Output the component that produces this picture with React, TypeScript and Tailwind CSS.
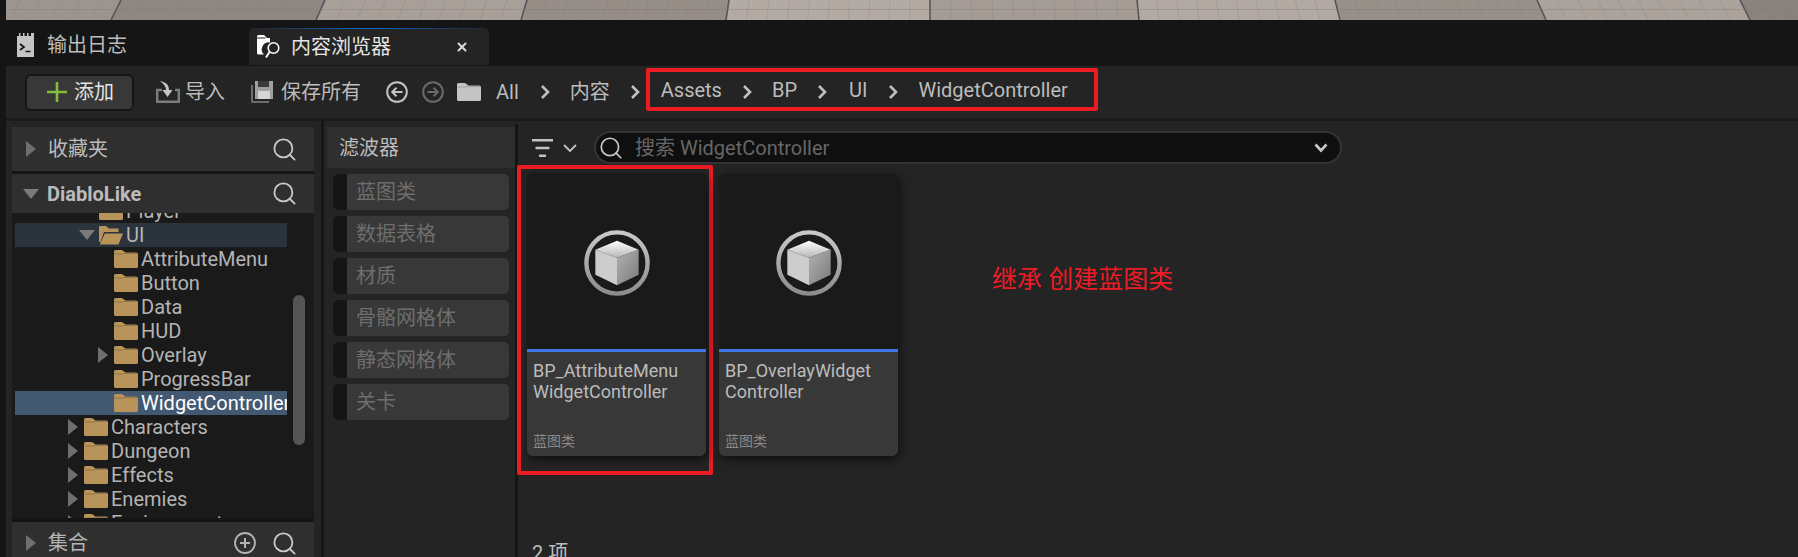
import { Search, X } from "lucide-react";

const cells = [
  { t: -80, b: -90, c: "#9c948e" },
  { t: 121, b: 111, c: "#8f8781" },
  { t: 325, b: 316, c: "#a89f99" },
  { t: 527, b: 521, c: "#968d87" },
  { t: 729, b: 726, c: "#b3aaa4" },
  { t: 930, b: 930, c: "#a59c96" },
  { t: 1137, b: 1139, c: "#b2a9a3" },
  { t: 1335, b: 1340, c: "#979089" },
  { t: 1537, b: 1546, c: "#aaa29b" },
  { t: 1740, b: 1750, c: "#8a827c" },
];

// the strip of floor left over from the viewport above the panel
function Floor() {
  return (
    <svg viewBox="6 0 1792 20" className="block h-[20px] w-full shrink-0">
      {cells.map((cell, i) => {
        const next = cells[i + 1] ?? { t: 1950, b: 1965 };
        const lines = Array.from({ length: 10 }, (_, n) => n + 1);
        return (
          <g key={cell.t}>
            <polygon points={`${cell.t},0 ${next.t},0 ${next.b},20 ${cell.b},20`} fill={cell.c} />
            {lines.map((n) => (
              <line
                key={n}
                x1={cell.t + ((next.t - cell.t) * n) / 10}
                y1={0}
                x2={cell.b + ((next.b - cell.b) * n) / 10}
                y2={20}
                stroke="#7d7671"
                strokeOpacity={0.3}
                strokeWidth={0.8}
              />
            ))}
            <line x1={cell.t} y1={0} x2={cell.b} y2={20} stroke="#55555c" strokeWidth={1.6} />
          </g>
        );
      })}
      <line x1={0} y1={9.5} x2={1800} y2={9.5} stroke="#7d7671" strokeOpacity={0.45} strokeWidth={0.8} />
    </svg>
  );
}

function Chevron({ className = "" }: { className?: string }) {
  return (
    <svg viewBox="0 0 10 16" className={`h-[16px] w-[10px] shrink-0 ${className}`}>
      <path d="M2 2l6 6-6 6" fill="none" stroke="#c0c0c0" strokeWidth="2.6" />
    </svg>
  );
}

function Folder({ color = "#b8935a", className = "" }: { color?: string; className?: string }) {
  return (
    <svg viewBox="0 0 24 18" className={`h-[18px] w-[24px] shrink-0 ${className}`}>
      <path d="M0 1.5Q0 0 1.5 0H8l3.5 2.5H22.500Q24 2.500 24 4V16.500Q24 18 22.500 18H1.500Q0 18 0 16.500Z" fill={color} />
      <path d="M0 3.500h8.500L11 2.800H24V4H11L8.500 4.500H0Z" fill="#000" fillOpacity={0.18} />
    </svg>
  );
}

function OpenFolder() {
  return (
    <svg viewBox="0 0 24 20" className="h-[20px] w-[24px] shrink-0">
      <path d="M0 2Q0 1 1 1h6l3 2.500h9.500V7H5L1.500 17H0Z" fill="#b8935a" />
      <path d="M5.800 8.500H24L19.500 19.500H.8Z" fill="#b8935a" />
    </svg>
  );
}

function Triangle({ down = false, className = "" }: { down?: boolean; className?: string }) {
  return down ? (
    <svg viewBox="0 0 16 10" className={`h-[10px] w-[16px] shrink-0 ${className}`}>
      <path d="M0 0h16l-8 10z" fill="#7a7a7a" />
    </svg>
  ) : (
    <svg viewBox="0 0 10 16" className={`h-[16px] w-[10px] shrink-0 ${className}`}>
      <path d="M0 0l10 8-10 8z" fill="#6f6f6f" />
    </svg>
  );
}

function BlueprintIcon() {
  return (
    <svg viewBox="-35 -35 70 70" className="h-[68px] w-[68px]">
      <defs>
        <linearGradient id="ring" x1="0" y1="0" x2="0" y2="1">
          <stop offset="0" stopColor="#c8c8c8" />
          <stop offset="1" stopColor="#8c8c8c" />
        </linearGradient>
        <linearGradient id="cubeTop" x1="0" y1="0" x2="0" y2="1">
          <stop offset="0" stopColor="#ffffff" />
          <stop offset="1" stopColor="#b4b4b4" />
        </linearGradient>
        <linearGradient id="cubeRight" x1="0" y1="0" x2="1" y2="1">
          <stop offset="0" stopColor="#b0b0b0" />
          <stop offset="1" stopColor="#7c7c7c" />
        </linearGradient>
      </defs>
      <circle r="31.500" fill="none" stroke="url(#ring)" strokeWidth="4.500" />
      <path d="M0-23L22.300-13.700 0-5.300-22.300-13.700Z" fill="url(#cubeTop)" />
      <path d="M-22.300-13.700L0-5.300V23L-22.300 12Z" fill="#cdcdcd" />
      <path d="M22.300-13.700L0-5.300V23L22.300 12Z" fill="url(#cubeRight)" />
    </svg>
  );
}

function LogIcon() {
  return (
    <svg viewBox="0 0 17 24" className="ml-[11px] h-[24px] w-[17px] shrink-0">
      <path d="M0 3h2V0h1.500v3h2.500V0h1.500v3h2.500V0h1.500v3h2.500V0H17v24H0Z" fill="#c4c4c4" />
      <path d="M3 11l4 3-4 3M8.500 18.500h5" fill="none" stroke="#151515" strokeWidth="1.700" />
    </svg>
  );
}

function BrowserIcon() {
  return (
    <svg viewBox="0 0 24 24" className="ml-[8px] h-[24px] w-[24px] shrink-0">
      <path d="M0 1.500Q0 0 1.500 0H7l3 3h3V7.500A7 7 0 0 0 7 19.500H1.500Q0 19.500 0 18Z" fill="#ffffff" />
      <path d="M0 3h8.500" stroke="#242424" strokeWidth="1" />
      <circle cx="16.500" cy="13" r="5.300" fill="none" stroke="#ffffff" strokeWidth="1.600" />
      <path d="M12.500 17L9 22.500" stroke="#ffffff" strokeWidth="2" />
    </svg>
  );
}

function ImportIcon() {
  return (
    <svg viewBox="0 0 24 22" className="ml-[22px] h-[22px] w-[24px] shrink-0">
      <path d="M6 9H1.200V20.800H22.800V9H19" fill="none" stroke="#7c7c7c" strokeWidth="2.400" />
      <path d="M4 0C10 1 13 4 13 9h3.500L11.500 16 6.500 9H10C10 6 8 3 4 0Z" fill="#c4c4c4" />
    </svg>
  );
}

function SaveIcon() {
  return (
    <svg viewBox="0 0 22 22" className="h-[22px] w-[22px] shrink-0">
      <path d="M0 4h2V20H18V22H1.500Q0 22 0 20.500Z" fill="#6c6c6c" />
      <path d="M4 0H22V18H4Z" fill="#a0a0a0" />
      <path d="M7 0H18V6H7Z" fill="#3a3a3a" />
      <path d="M7 10H19V18H7Z" fill="#d4d4d4" />
    </svg>
  );
}

function CircleArrow({ dim = false, className = "" }: { dim?: boolean; className?: string }) {
  const c = dim ? "#6a6a6a" : "#c4c4c4";
  return (
    <svg viewBox="0 0 22 22" className={`h-[22px] w-[22px] shrink-0 ${className}`}>
      <circle cx="11" cy="11" r="9.800" fill="none" stroke={c} strokeWidth="2" />
      {dim ? (
        <path d="M5.500 11H15M11.500 6.800L15.800 11l-4.300 4.200" fill="none" stroke={c} strokeWidth="2" />
      ) : (
        <path d="M16.500 11H7M10.500 6.800L6.200 11l4.300 4.200" fill="none" stroke={c} strokeWidth="2" />
      )}
    </svg>
  );
}

function FilterIcon() {
  return (
    <svg viewBox="0 0 21 18" className="h-[18px] w-[21px] shrink-0">
      <path d="M0 1.200H21M4.500 9H16.500M8 16.800H13" stroke="#c4c4c4" strokeWidth="2.400" strokeLinecap="round" />
    </svg>
  );
}

function PlusCircle() {
  return (
    <svg viewBox="0 0 22 22" className="h-[22px] w-[22px] shrink-0">
      <circle cx="11" cy="11" r="10" fill="none" stroke="#b4b4b4" strokeWidth="1.800" />
      <path d="M11 6v10M6 11h10" stroke="#b4b4b4" strokeWidth="2" />
    </svg>
  );
}

function GreenPlus() {
  return (
    <svg viewBox="0 0 20 20" className="h-[20px] w-[20px] shrink-0">
      <path d="M10 0v20M0 10h20" stroke="#84bd3c" strokeWidth="2.600" />
    </svg>
  );
}

type Row = { name: string; pad: string; slot: string; arrow?: "right" | "down"; open?: boolean; tone?: string };

const rows: Row[] = [
  { name: "Player", pad: "pl-[64px]", slot: "w-[20px]" },
  { name: "UI", pad: "pl-[64px]", slot: "w-[20px]", arrow: "down", open: true, tone: "bg-[#2b333d]" },
  { name: "AttributeMenu", pad: "pl-[83px]", slot: "w-[16px]" },
  { name: "Button", pad: "pl-[83px]", slot: "w-[16px]" },
  { name: "Data", pad: "pl-[83px]", slot: "w-[16px]" },
  { name: "HUD", pad: "pl-[83px]", slot: "w-[16px]" },
  { name: "Overlay", pad: "pl-[83px]", slot: "w-[16px]", arrow: "right" },
  { name: "ProgressBar", pad: "pl-[83px]", slot: "w-[16px]" },
  { name: "WidgetController", pad: "pl-[83px]", slot: "w-[16px]", tone: "bg-[#435871] text-white" },
  { name: "Characters", pad: "pl-[53px]", slot: "w-[16px]", arrow: "right" },
  { name: "Dungeon", pad: "pl-[53px]", slot: "w-[16px]", arrow: "right" },
  { name: "Effects", pad: "pl-[53px]", slot: "w-[16px]", arrow: "right" },
  { name: "Enemies", pad: "pl-[53px]", slot: "w-[16px]", arrow: "right" },
  { name: "Environment", pad: "pl-[53px]", slot: "w-[16px]", arrow: "right" },
];

const filters = ["蓝图类", "数据表格", "材质", "骨骼网格体", "静态网格体", "关卡"];

function AssetCard({ lines }: { lines: string[] }) {
  return (
    <div className="flex h-[283px] w-[179px] shrink-0 flex-col overflow-hidden rounded-[6px] shadow-[2px_4px_8px_rgba(0,0,0,0.55)]">
      <div className="flex h-[176px] items-center justify-center bg-[#1a1a1a] pt-[4px]">
        <BlueprintIcon />
      </div>
      <div className="h-[3px] bg-[#3f78e6]" />
      <div className="flex flex-1 flex-col bg-[#383838] pl-[6px] pt-[8px]">
        <div className="text-[18px] leading-[21px] text-[#bcbcbc]">
          {lines.map((l) => (
            <div key={l}>{l}</div>
          ))}
        </div>
        <div className="mt-auto pb-[5px] text-[14px] leading-[20px] text-[#8a8a8a]">蓝图类</div>
      </div>
    </div>
  );
}

export default function App() {
  return (
    <div className="flex h-[557px] w-[1798px] overflow-hidden bg-[#151515] font-['Roboto','Noto_Sans_CJK_SC',sans-serif] text-[20px] text-[#bcbcbc]">
      <div className="w-[6px] shrink-0" />
      <div className="flex min-w-0 flex-1 flex-col">
        <Floor />

        {/* Tabs */}
        <div className="flex h-[46px] shrink-0">
          <div className="flex h-[46px] w-[243px] items-center pt-[4px]">
            <LogIcon />
            <span className="ml-[13px]">输出日志</span>
          </div>
          <div className="mt-[8px] flex h-[37px] w-[240px] flex-col rounded-t-[5px] bg-[#242424]">
            <div className="h-[1px] bg-gradient-to-r from-transparent via-[#0a6acf] to-transparent" />
            <div className="flex flex-1 items-center pb-[1px] text-[#e4e4e4]">
              <BrowserIcon />
              <span className="ml-[10px]">内容浏览器</span>
              <X className="ml-auto mr-[20px] h-[14px] w-[14px] text-[#d8d8d8]" strokeWidth={3.5} />
            </div>
          </div>
        </div>

        {/* Toolbar */}
        <div className="flex h-[52px] shrink-0 items-center bg-[#242424]">
          <div className="ml-[19px] flex h-[37px] w-[109px] items-center rounded-[6px] border-2 border-[#151515] bg-[#383838] pl-[20px]">
            <GreenPlus />
            <span className="ml-[7px] text-[#e4e4e4]">添加</span>
          </div>
          <ImportIcon />
          <span className="ml-[5px]">导入</span>
          <span className="ml-[26px]"><SaveIcon /></span>
          <span className="ml-[8px]">保存所有</span>
          <CircleArrow className="ml-[25px]" />
          <CircleArrow dim className="ml-[14px]" />
          <Folder color="#c4c4c4" className="ml-[13px] h-[18px]" />
          <span className="ml-[15px]">All</span>
          <Chevron className="ml-[21px]" />
          <span className="ml-[20px]">内容</span>
          <Chevron className="ml-[20px]" />
          <div className="ml-[6px] mt-[-5px] flex h-[43px] w-[452px] shrink-0 items-center rounded-[2px] border-4 border-[#ed1c24] pl-[11px] pt-[1px]">
            <span>Assets</span>
            <Chevron className="ml-[20px] mt-[4px]" />
            <span className="ml-[20px]">BP</span>
            <Chevron className="ml-[20px] mt-[4px]" />
            <span className="ml-[22px]">UI</span>
            <Chevron className="ml-[21px] mt-[4px]" />
            <span className="ml-[20px]">WidgetController</span>
          </div>
        </div>
        <div className="h-[3px] shrink-0 bg-[#1a1a1a]" />

        {/* Body */}
        <div className="flex min-h-0 flex-1 bg-[#242424]">
          {/* Tree side */}
          <div className="ml-[6px] flex w-[302px] shrink-0 flex-col pt-[6px]">
            <div className="flex h-[44px] shrink-0 items-center bg-[#2f2f2f] pr-[16px]">
              <Triangle className="ml-[14px]" />
              <span className="ml-[12px]">收藏夹</span>
              <Search className="ml-auto h-[27px] w-[27px] text-[#c8c8c8]" strokeWidth={1.6} />
            </div>
            <div className="h-[3px] shrink-0 bg-[#151515]" />
            <div className="flex h-[39px] shrink-0 items-center bg-[#2f2f2f] pr-[16px]">
              <Triangle down className="ml-[11px]" />
              <span className="ml-[8px] font-bold text-[#bcbcbc]">DiabloLike</span>
              <Search className="ml-auto h-[27px] w-[27px] text-[#c8c8c8]" strokeWidth={1.6} />
            </div>
            <div className="relative h-[305px] shrink-0 overflow-hidden bg-[#1a1a1a]">
              <div className="-mt-[14px] ml-[3px] w-[272px] overflow-hidden text-[20px] text-[#b4b4b4]">
                {rows.map((r) => (
                  <div key={r.name} className={`flex h-[24px] items-center whitespace-nowrap ${r.pad} ${r.tone ?? ""}`}>
                    <div className={`flex shrink-0 items-center ${r.slot}`}>
                      {r.arrow === "down" && <Triangle down />}
                      {r.arrow === "right" && <Triangle />}
                    </div>
                    {r.open ? <OpenFolder /> : <Folder />}
                    <span className="ml-[3px]">{r.name}</span>
                  </div>
                ))}
              </div>
              {/* scrollbar thumb */}
              <div className="absolute left-[281px] top-[82px] h-[150px] w-[12px] rounded-full bg-[#555555]" />
            </div>
            <div className="h-[4px] shrink-0 bg-[#151515]" />
            <div className="flex h-[42px] shrink-0 items-center bg-[#2f2f2f] pr-[16px]">
              <Triangle className="ml-[14px]" />
              <span className="ml-[12px] text-[#b4b4b4]">集合</span>
              <span className="ml-auto"><PlusCircle /></span>
              <Search className="ml-[15px] h-[27px] w-[27px] text-[#c8c8c8]" strokeWidth={1.6} />
            </div>
          </div>

          {/* Splitter */}
          <div className="ml-[7px] w-[3px] shrink-0 bg-[#151515]" />

          {/* Filters */}
          <div className="ml-[3px] flex w-[188px] shrink-0 flex-col pt-[6px]">
            <div className="flex h-[41px] items-center bg-[#2f2f2f] pl-[12px]">滤波器</div>
            <div className="ml-[6px] mt-[6px] flex w-[176px] flex-col gap-[6px]">
              {filters.map((f) => (
                <div key={f} className="flex h-[36px] items-center overflow-hidden rounded-[5px] bg-[#383838] text-[#6e6e6e]">
                  <div className="h-full w-[14px] shrink-0 bg-[#151515]" />
                  <span className="ml-[9px]">{f}</span>
                </div>
              ))}
            </div>
          </div>

          {/* Assets */}
          <div className="mt-[3px] flex min-w-0 flex-1 flex-col border-l-[3px] border-[#151515] pl-[14px] pt-[7px]">
            <div className="flex h-[33px] shrink-0 items-center">
              <FilterIcon />
              <svg viewBox="0 0 14 8" className="ml-[10px] h-[8px] w-[14px] shrink-0">
                <path d="M1 1l6 6 6-6" fill="none" stroke="#c4c4c4" strokeWidth="1.800" />
              </svg>
              <div className="ml-[17px] flex h-[33px] w-[748px] items-center rounded-full border-2 border-[#333333] bg-[#0f0f0f] pl-[2px] pr-[12px]">
                <Search className="h-[26px] w-[26px] text-[#c8c8c8]" strokeWidth={1.6} />
                <span className="ml-[11px] text-[#666666]">搜索 WidgetController</span>
                <svg viewBox="0 0 14 10" className="ml-auto h-[10px] w-[14px]">
                  <path d="M1.500 1.500L7 7.500l5.500-6" fill="none" stroke="#c8c8c8" strokeWidth="2.600" />
                </svg>
              </div>
            </div>

            <div className="mt-[1px] flex shrink-0 items-start">
              <div className="-ml-[15px] h-[310px] w-[196px] shrink-0 rounded-[2px] border-4 border-[#ed1c24] pl-[6px] pt-[4px]">
                <AssetCard lines={["BP_AttributeMenu", "WidgetController"]} />
              </div>
              <div className="ml-[6px] mt-[8px]">
                <AssetCard lines={["BP_OverlayWidget", "Controller"]} />
              </div>
              <div className="ml-[94px] mt-[100px] whitespace-nowrap text-[25px] leading-[30px] text-[#ed1c24]">继承 创建蓝图类</div>
            </div>

            <div className="mt-[66px] leading-[24px]">2 项</div>
          </div>
        </div>
      </div>
    </div>
  );
}
